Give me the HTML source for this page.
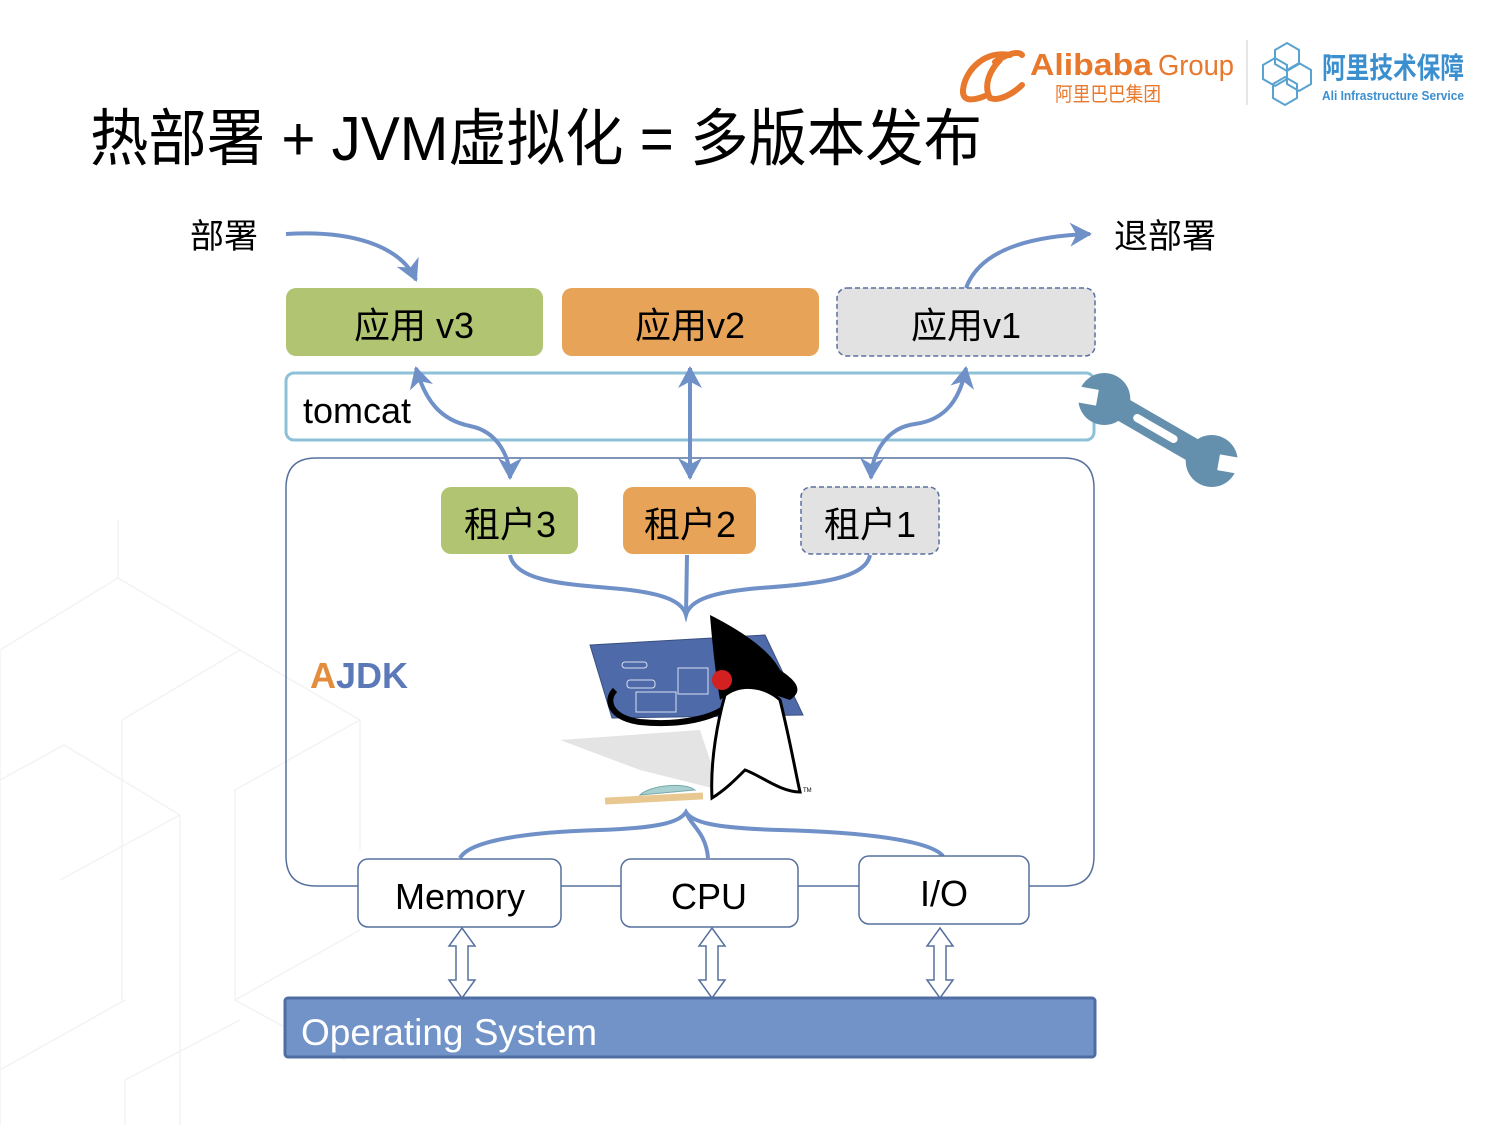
<!DOCTYPE html>
<html><head><meta charset="utf-8"><style>
html,body{margin:0;padding:0;background:#fff;}
svg{display:block;}
text{font-family:"Liberation Sans","Noto Sans CJK SC",sans-serif;}
</style></head><body>
<svg width="1500" height="1125" viewBox="0 0 1500 1125" xmlns="http://www.w3.org/2000/svg">
<defs>
<marker id="ah" markerWidth="7" markerHeight="7" refX="5" refY="3.5" orient="auto-start-reverse" markerUnits="strokeWidth">
<path d="M0,0.5 L5.5,3.5 L0,6.5 L1.6,3.5 Z" fill="#7090c8"/>
</marker>
</defs>
<!-- faint background cubes -->
<g stroke="#f3f3f3" stroke-width="1.5" fill="none">
<path d="M0,650 L118,578 L240,650 L360,720 L360,850 M0,650 L0,1125 M118,578 L118,520 M240,650 L122,720 L122,1000 M360,720 L235,790 L235,1000 L360,930 M0,780 L64,745 L180,815 L180,1125 M180,815 L60,880 M125,1000 L0,1070 M235,1000 L345,1060 M125,1125 L125,1080 L240,1020"/>
</g>
<!-- Title -->
<text x="90" y="160" font-size="62" textLength="892" lengthAdjust="spacingAndGlyphs" fill="#000">热部署 + JVM虚拟化 = 多版本发布</text>
<!-- Alibaba logo -->
<path d="M1010,55 C985,50 965,70 963,90 C962,103 975,100 985,96 M1000,60 C990,70 983,85 990,98 C1000,102 1015,92 1022,85 M995,62 C1005,55 1018,50 1022,55" stroke="#e8782c" stroke-width="6" fill="none" stroke-linecap="round"/>
<text x="1030" y="75" font-size="31" font-weight="bold" fill="#e8782c" textLength="122" lengthAdjust="spacingAndGlyphs">Alibaba</text>
<text x="1158" y="75" font-size="29" fill="#e8782c" textLength="76" lengthAdjust="spacingAndGlyphs">Group</text>
<text x="1055" y="101" font-size="20" fill="#e8782c" textLength="106" lengthAdjust="spacingAndGlyphs">阿里巴巴集团</text>
<line x1="1247" y1="40" x2="1247" y2="105" stroke="#ddd" stroke-width="1.5"/>
<g stroke="#5aa3d0" stroke-width="2" fill="none">
<path d="M1275,50 l12,-7 l12,7 v14 l-12,7 l-12,-7z M1263,65 l12,-7 l12,7 v14 l-12,7 l-12,-7z M1287,70 l12,-7 l12,7 v14 l-12,7 l-12,-7z M1273,84 l12,-7 l12,7 v14 l-12,7 l-12,-7z"/>
</g>
<text x="1322" y="78" font-size="29" font-weight="bold" fill="#3b8fcf" textLength="142" lengthAdjust="spacingAndGlyphs">阿里技术保障</text>
<text x="1322" y="100" font-size="13" font-weight="bold" fill="#3b8fcf" textLength="142" lengthAdjust="spacingAndGlyphs">Ali Infrastructure Service</text>

<!-- deploy labels -->
<text x="190" y="248" font-size="34" fill="#000">部署</text>
<text x="1114" y="248" font-size="34" fill="#000">退部署</text>
<path d="M286,234 C350,230 400,245 416,280" stroke="#7090c8" stroke-width="4" fill="none" marker-end="url(#ah)"/>
<path d="M966,288 C980,250 1030,236 1090,234" stroke="#7090c8" stroke-width="4" fill="none" marker-end="url(#ah)"/>

<!-- app boxes -->
<rect x="286" y="288" width="257" height="68" rx="10" fill="#b1c472"/>
<text x="414" y="338" font-size="36" text-anchor="middle">应用  v3</text>
<rect x="562" y="288" width="257" height="68" rx="10" fill="#e7a458"/>
<text x="690" y="338" font-size="36" text-anchor="middle">应用v2</text>
<rect x="837" y="288" width="258" height="68" rx="10" fill="#e2e2e2" stroke="#5a6fa0" stroke-width="1.5" stroke-dasharray="5,3"/>
<text x="966" y="338" font-size="36" text-anchor="middle">应用v1</text>

<!-- tomcat -->
<rect x="286" y="373" width="808" height="67" rx="8" fill="#fff" stroke="#8ec0d8" stroke-width="3"/>
<text x="303" y="423" font-size="36">tomcat</text>

<!-- wrench -->
<g transform="translate(1158,430) rotate(30)" fill="#6590ad">
<rect x="-50" y="-12" width="100" height="24"/>
<circle cx="-62" cy="0" r="26"/>
<circle cx="62" cy="0" r="26"/>
<rect x="-95" y="-8" width="26" height="16" fill="#fff" transform="rotate(-20 -62 0)"/>
<rect x="69" y="-8" width="26" height="16" fill="#fff" transform="rotate(-20 62 0)"/>
<rect x="-28" y="-4" width="50" height="8" rx="4" fill="#fff"/>
</g>

<!-- AJDK container -->
<path d="M358,886 L316,886 Q286,886 286,856 L286,488 Q286,458 316,458 L1064,458 Q1094,458 1094,488 L1094,856 Q1094,886 1064,886 L1029,886" stroke="#56709e" stroke-width="1.5" fill="none"/>
<line x1="561" y1="886" x2="621" y2="886" stroke="#56709e" stroke-width="1.5"/>
<line x1="798" y1="886" x2="859" y2="886" stroke="#56709e" stroke-width="1.5"/>

<!-- tenant arrows -->
<g stroke="#7090c8" stroke-width="4" fill="none">
<path d="M416,368 C425,400 440,420 470,426 C500,432 510,460 510,478" marker-end="url(#ah)" marker-start="url(#ah)"/>
<path d="M690,368 L690,478" marker-end="url(#ah)" marker-start="url(#ah)"/>
<path d="M966,368 C960,400 945,420 915,424 C885,428 872,455 871,478" marker-end="url(#ah)" marker-start="url(#ah)"/>
</g>

<!-- tenant boxes -->
<rect x="441" y="487" width="137" height="67" rx="10" fill="#b1c472"/>
<text x="510" y="537" font-size="36" text-anchor="middle">租户3</text>
<rect x="623" y="487" width="133" height="67" rx="10" fill="#e7a458"/>
<text x="690" y="537" font-size="36" text-anchor="middle">租户2</text>
<rect x="801" y="487" width="138" height="67" rx="10" fill="#e2e2e2" stroke="#5a6fa0" stroke-width="1.5" stroke-dasharray="5,3"/>
<text x="870" y="537" font-size="36" text-anchor="middle">租户1</text>

<!-- brace top -->
<path d="M510,555 C515,580 560,584 610,588 C660,592 682,600 686,615 C690,600 712,592 760,588 C820,584 866,578 870,555 M687,555 L686,615" stroke="#7090c8" stroke-width="4" fill="none"/>

<text x="310" y="688" font-size="36" font-weight="bold" fill="#e38c3c">A</text>
<text x="336" y="688" font-size="36" font-weight="bold" fill="#5b79b8">JDK</text>

<!-- Duke -->
<path d="M560,740 L700,730 L720,790 L640,770 Z" fill="#ddd" opacity="0.8"/>
<polygon points="590,645 765,635 803,715 612,718" fill="#4e6aa8" stroke="#3a4f80" stroke-width="1"/>
<g stroke="#d8e0f0" stroke-width="1" fill="none">
<rect x="622" y="662" width="25" height="6" rx="3"/><rect x="627" y="680" width="28" height="8" rx="3"/><rect x="636" y="692" width="40" height="20" /><rect x="678" y="668" width="30" height="26"/>
</g>
<path d="M615,690 C605,700 610,718 640,722 C680,726 715,718 728,705" stroke="#000" stroke-width="6" fill="none"/>
<path d="M710,615 C740,630 770,650 780,670 C795,680 805,690 790,700 L760,690 C740,690 725,695 720,700 C715,670 712,640 710,615 Z" fill="#000"/>
<path d="M725,695 C745,680 770,690 780,700 C790,740 795,770 800,792 C780,792 760,775 745,770 C735,780 725,790 712,798 C710,760 718,720 725,695 Z" fill="#fff" stroke="#000" stroke-width="3"/>
<circle cx="722" cy="680" r="10" fill="#d42020"/>
<path d="M640,795 C650,785 685,782 695,790 Z" fill="#a8d0d0" stroke="#7aa" stroke-width="1"/>
<rect x="605" y="795" width="98" height="7" fill="#e8c890" transform="rotate(-3 654 798)"/>
<text x="803" y="792" font-size="6">TM</text>

<!-- brace bottom -->
<path d="M460,858 C470,840 530,832 600,830 C660,828 680,822 686,812 C692,822 712,828 780,830 C860,832 930,840 943,856 M686,812 C690,825 706,832 708,858" stroke="#7090c8" stroke-width="4" fill="none"/>

<!-- resource boxes -->
<rect x="358" y="859" width="203" height="68" rx="10" fill="#fff" stroke="#56709e" stroke-width="1.5"/>
<text x="460" y="909" font-size="36" text-anchor="middle">Memory</text>
<rect x="621" y="859" width="177" height="68" rx="10" fill="#fff" stroke="#56709e" stroke-width="1.5"/>
<text x="709" y="909" font-size="36" text-anchor="middle">CPU</text>
<rect x="859" y="856" width="170" height="68" rx="10" fill="#fff" stroke="#56709e" stroke-width="1.5"/>
<text x="944" y="906" font-size="36" text-anchor="middle">I/O</text>

<!-- hollow double arrows -->
<g fill="#fff" stroke="#56709e" stroke-width="1.5">
<path d="M462,928 l13,18 h-7 v34 h7 l-13,18 l-13,-18 h7 v-34 h-7 z"/>
<path d="M712,928 l13,18 h-7 v34 h7 l-13,18 l-13,-18 h7 v-34 h-7 z"/>
<path d="M940,928 l13,18 h-7 v34 h7 l-13,18 l-13,-18 h7 v-34 h-7 z"/>
</g>

<!-- OS -->
<rect x="285" y="998" width="810" height="59" rx="3" fill="#7193c8" stroke="#4f6da3" stroke-width="3"/>
<text x="301" y="1045" font-size="37" fill="#fff">Operating System</text>
</svg>
</body></html>
